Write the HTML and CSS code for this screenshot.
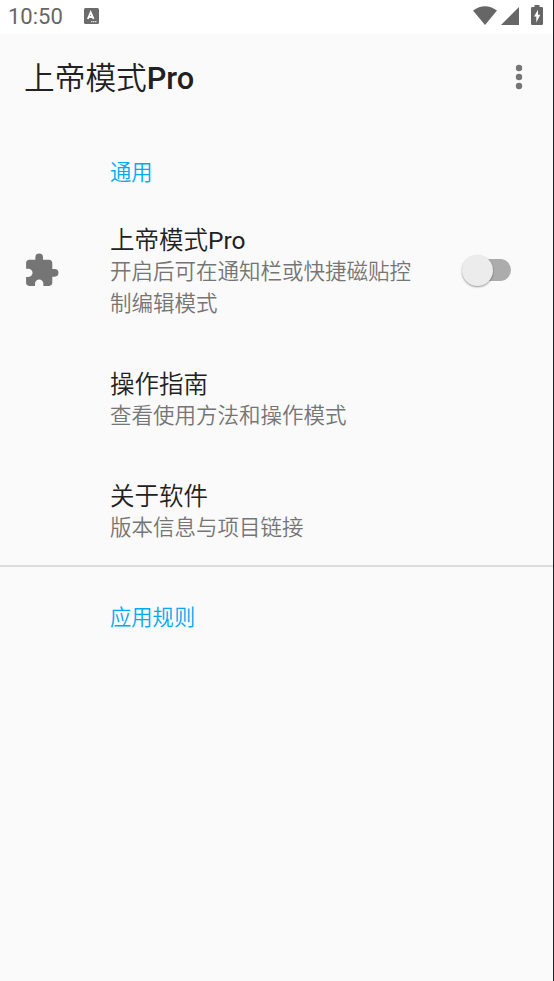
FILE: index.html
```html
<!DOCTYPE html>
<html lang="zh-CN">
<head>
<meta charset="utf-8">
<title>上帝模式Pro</title>
<link rel="stylesheet" href="styles.css">
</head>
<body>
<div class="screen">
  <div class="status">
    <span class="clock">10:50</span>
    <svg class="input-icon" width="15" height="16" viewBox="0 0 15 16"><rect width="15" height="16" rx="1.500" fill="#6b6b6b"/><path d="M3.800 11 6.700 4.300 9.600 11M4.800 9h4" fill="none" stroke="#fff" stroke-width="1.800"/><path d="M7 13.700h6" stroke="#fff" stroke-dasharray="1.500 .5"/></svg>
    <span class="spacer"></span>
    <svg class="wifi" width="24" height="19" viewBox="0 0 24 19"><path d="M0 4.500Q12-4 24 4.500L12 19Z" fill="#666"/></svg>
    <svg class="signal" width="18" height="18" viewBox="0 0 18 18"><path d="M18 0V18H0Z" fill="#666"/></svg>
    <svg class="battery" width="12" height="20" viewBox="0 0 12 20"><path d="M3.500 0h5v2h2.300q1.200 0 1.200 1.200v15.600q0 1.200-1.200 1.200H1.200Q0 20 0 18.800V3.200Q0 2 1.200 2h2.300Z" fill="#666"/><path d="M7 4.800 3 11.500H5.300V17.500L9.300 9.800H7Z" fill="#fff"/></svg>
  </div>
  <header class="bar">
    <h1>上帝模式<b>Pro</b></h1>
    <svg class="menu" width="8" height="26" viewBox="0 0 8 26" fill="#757575"><circle cx="4" cy="4" r="3.200"/><circle cx="4" cy="13" r="3.200"/><circle cx="4" cy="22" r="3.200"/></svg>
  </header>
  <main>
    <h2 class="general">通用</h2>
    <section class="row master">
      <svg class="puzzle" width="37" height="37" viewBox="0 0 24 24"><path fill="#757575" d="M20.500 11H19V7c0-1.100-.9-2-2-2h-4V3.500a2.500 2.500 0 0 0-5 0V5H4c-1.100 0-1.990.9-1.990 2v3.800H3.500c1.490 0 2.700 1.210 2.700 2.700s-1.210 2.700-2.700 2.700H2V20c0 1.100.9 2 2 2h3.800v-1.500c0-1.490 1.210-2.700 2.700-2.700s2.700 1.210 2.700 2.700V22H17c1.100 0 2-.9 2-2v-4h1.500a2.500 2.500 0 0 0 0-5z"/></svg>
      <div class="copy"><h3>上帝模式<span>Pro</span></h3><p>开启后可在通知栏或快捷磁贴控<br>制编辑模式</p></div>
      <span class="switch"></span>
    </section>
    <section class="row guide"><div class="copy"><h3>操作指南</h3><p>查看使用方法和操作模式</p></div></section>
    <section class="row about"><div class="copy"><h3>关于软件</h3><p>版本信息与项目链接</p></div></section>
    <h2 class="rules">应用规则</h2>
  </main>
</div>
</body>
</html>
```

FILE: styles.css
```css
* { box-sizing: border-box; margin: 0; padding: 0; }
body { background: #fafafa; font-family: Roboto, "Noto Sans CJK SC", sans-serif; color: #212121; }
.screen { height: 981px; border-right: 1px solid #1c1b29; overflow: hidden; }
.status { height: 34px; display: flex; align-items: center; padding: 0 10px 4px 8px; background: #fff; color: #666; }
.clock { width: 76px; font-size: 22px; line-height: 32px; padding-top: 4px; }
.input-icon { margin-top: 1px; }
.spacer { flex: 1; }
.wifi { margin-right: 4px; }
.signal { margin: 2px 12px 0 0; }
.bar { height: 87px; padding: 0 30px 0 24px; display: flex; align-items: center; justify-content: space-between; }
h1 { font-size: 30.700px; font-weight: 350; line-height: 40px; padding-top: 2px; }
h1 b { font-weight: 500; }
.menu { margin-top: -2px; }
h2 { padding-left: 110px; font-size: 21.300px; font-weight: 350; line-height: 32px; color: #03a9f4; }
.general { padding-top: 36px; height: 87px; }
.row { display: flex; padding: 17px 0 0 110px; }
.master { height: 144px; padding-left: 23px; }
.puzzle { margin: 27px 50px 0 0; flex: none; }
h3 { font-size: 24.500px; line-height: 32px; height: 31px; font-weight: 350; }
h3 span { font-weight: 400; }
p { font-size: 21.500px; line-height: 32px; font-weight: 350; color: #757575; white-space: nowrap; }
.guide { height: 112px; }
.about { height: 103px; border-bottom: 2px solid #dcdcdc; }
.rules { padding-top: 35px; }
.master .copy { width: 352px; }
.switch { position: relative; width: 49px; height: 34px; margin-top: 28px; display: flex; align-items: center; }
.switch::before { content: ""; position: absolute; right: 0; top: 6px; width: 40px; height: 22px; border-radius: 11px; background: #acacac; }
.switch::after { content: ""; position: relative; width: 31px; height: 31px; border-radius: 50%; background: #ececec; box-shadow: 0 1px 2px #0006; }
```
